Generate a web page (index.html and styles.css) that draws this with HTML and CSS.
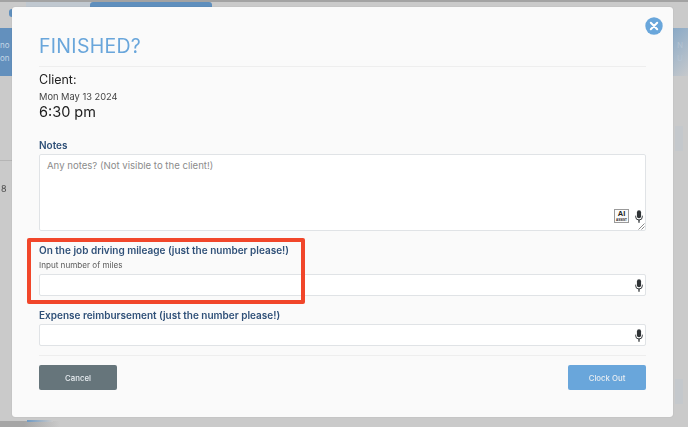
FILE: index.html
```html
<!DOCTYPE html>
<html lang="en">
<head>
<meta charset="utf-8">
<title>Finished?</title>
<link rel="stylesheet" href="styles.css">
</head>
<body>
<div class="backdrop">
  <div class="top-strip"></div>
  <div class="tabs"><span class="tab-pale"></span><span class="tab-blue"></span></div>
  <span class="dot"></span>
  <div class="band band-left"><span>no</span><span>on</span></div>
  <div class="band band-right"><span>N</span><span>U</span></div>
  <div class="rule-left"></div>
  <span class="eight">8</span>
  <span class="side-chip chip-top"></span>
  <span class="side-chip chip-bottom"></span>
  <span class="bottom-shade"></span>
  <span class="bottom-tab"></span>
</div>

<main class="modal">
  <button class="close" aria-label="Close">
    <svg viewBox="0 0 18 18" width="18" height="18"><circle cx="9" cy="9" r="8.7" fill="#69a6db"/><path d="M5.8 5.8l6.4 6.4M12.2 5.8l-6.4 6.4" stroke="#fff" stroke-width="2" stroke-linecap="round"/></svg>
  </button>
  <h1 class="title">FINISHED?</h1>
  <hr class="divider">
  <div class="client">Client:</div>
  <div class="date">Mon May 13 2024</div>
  <div class="time">6:30 pm</div>

  <label class="label notes-label">Notes</label>
  <div class="field textarea">
    <span class="placeholder">Any notes? (Not visible to the client!)</span>
    <div class="textarea-tools">
      <span class="ai"><b>AI</b><small>ASSIST</small></span>
      <svg class="mic" viewBox="0 0 10 16" width="8" height="13"><use href="#mic"/></svg>
    </div>
    <svg class="grip" viewBox="0 0 7 7" width="7" height="7"><path d="M6.5.5l-6 6M6.5 3.5l-3 3" stroke="#8a8a8a" stroke-width="1"/></svg>
  </div>

  <label class="label mileage-label">On the job driving mileage (just the number please!)</label>
  <div class="hint">Input number of miles</div>
  <div class="field input mileage-input">
    <svg class="mic" viewBox="0 0 10 16" width="8" height="13"><use href="#mic"/></svg>
  </div>

  <label class="label expense-label">Expense reimbursement (just the number please!)</label>
  <div class="field input">
    <svg class="mic" viewBox="0 0 10 16" width="8" height="13"><use href="#mic"/></svg>
  </div>

  <hr class="divider lower">
  <div class="actions">
    <button class="btn cancel">Cancel</button>
    <button class="btn clock">Clock Out</button>
  </div>
  <div class="highlight"></div>
</main>

<svg class="defs" width="0" height="0" aria-hidden="true">
  <symbol id="mic" viewBox="0 0 10 16">
    <rect x="2.4" y="0.3" width="5.2" height="10" rx="2.6" fill="#2f3336"/>
    <path d="M.8 7v1.2a4.2 4.2 0 0 0 8.4 0V7" fill="none" stroke="#2f3336" stroke-width="1.2"/>
    <path d="M5 12.2v3.5" stroke="#2f3336" stroke-width="1.6"/>
  </symbol>
</svg>
</body>
</html>
```
FILE: styles.css
```css
* { box-sizing: border-box; }
html, body { margin: 0; height: 100%; }
body {
  position: relative;
  width: 688px;
  height: 427px;
  overflow: hidden;
  background: #cacaca;
  font-family: Inter, "Open Sans", "Liberation Sans", sans-serif;
  filter: blur(.35px);
}
.backdrop { position: absolute; inset: 0; }
.top-strip { height: 2px; background: #a3a3a3; }
.tabs { position: absolute; top: 2px; left: 26px; display: flex; }
.tab-pale { width: 64px; height: 5px; background: #c0c8d0; }
.tab-blue { width: 122px; height: 5px; background: #5f8fbd; border-radius: 3px 3px 0 0; }
.dot { position: absolute; left: 9px; top: 9px; width: 6px; height: 8px; border-radius: 3px; background: #5f8fbd; }
.band {
  position: absolute;
  top: 28px;
  height: 48px;
  padding-top: 12px;
  display: flex;
  flex-direction: column;
  gap: 3px;
  font-size: 8px;
  line-height: 10px;
}
.band-left { left: 0; width: 12px; background: #6390bd; color: #c4d6e6; }
.band-right {
  right: 0;
  width: 15px;
  padding-left: 4px;
  background: linear-gradient(135deg, #8aa9c6, #c6c9cc);
  color: #b4c3d2;
}
.rule-left { position: absolute; left: 0; top: 160px; width: 12px; height: 1px; background: #b5b5b5; }
.eight { position: absolute; left: 1px; top: 183px; font-size: 9px; line-height: 11px; color: #4a4a4a; }
.side-chip { position: absolute; left: 675px; width: 8px; height: 25px; background: #c4c8cc; }
.chip-top { top: 126px; }
.chip-bottom { top: 379px; }
.bottom-shade {
  position: absolute;
  left: 0;
  top: 421px;
  width: 60px;
  height: 6px;
  background: linear-gradient(90deg, #a6a6a6 40%, #cacaca);
}
.bottom-tab {
  position: absolute;
  left: 27px;
  top: 420px;
  width: 26px;
  height: 2px;
  background: linear-gradient(90deg, #6f9ac4, #cacaca);
}

.modal {
  position: absolute;
  left: 12px;
  top: 7px;
  width: 661px;
  height: 410px;
  padding: 0 27px;
  background: #fafafa;
  border-radius: 3px;
  box-shadow: 0 0 1px rgba(0,0,0,.25);
}
.close {
  position: absolute;
  top: 10px;
  right: 10px;
  width: 18px;
  height: 18px;
  padding: 0;
  border: 0;
  background: none;
  display: block;
}
.close svg { display: block; }
.title {
  margin: 0;
  padding-top: 27px;
  font-size: 19.5px;
  line-height: 24px;
  font-weight: 400;
  letter-spacing: .3px;
  color: #69a6db;
}
.divider { margin: 8px 0 0; border: 0; border-top: 1px solid #eeeeee; }
.client { margin-top: 5px; font-size: 12.5px; line-height: 15px; color: #222; }
.date { margin-top: 4px; font-size: 9.3px; line-height: 12px; color: #444; }
.time { font-size: 14.5px; line-height: 18px; color: #1c1c1c; }
.label {
  display: block;
  font-size: 10px;
  line-height: 13px;
  font-weight: 600;
  color: #2f5078;
}
.notes-label { margin-top: 18px; }
.field {
  position: relative;
  background: #fff;
  border: 1px solid #e0e3e6;
  border-radius: 2px;
  margin-top: 2px;
}
.textarea { height: 77px; padding: 4px 7px; }
.placeholder { display: block; font-size: 9.6px; line-height: 13px; color: #8c8c8c; }
.textarea-tools {
  position: absolute;
  right: 2px;
  bottom: 7px;
  display: flex;
  align-items: flex-end;
  gap: 6px;
}
.ai {
  width: 15px;
  height: 14px;
  border: 1px solid #9a9a9a;
  background: #fafafa;
  display: flex;
  flex-direction: column;
  align-items: center;
  color: #222;
  line-height: 1;
}
.ai b { font-size: 7.5px; line-height: 8px; font-family: "Liberation Sans", sans-serif; }
.ai small { font-size: 3px; line-height: 4px; font-weight: 700; font-family: "Liberation Sans", sans-serif; }
.mileage-label { margin-top: 13px; }
.hint { margin-top: 3px; font-size: 8.1px; line-height: 10px; color: #5a5a5a; }
.input { height: 22px; display: flex; justify-content: flex-end; align-items: center; padding-right: 2px; }
.mileage-input { margin-top: 4px; }
.expense-label { margin-top: 13px; }
.mic { display: block; }
.grip { position: absolute; right: 0; bottom: 0; }
.divider.lower { margin-top: 9px; }
.actions { margin-top: 9px; display: flex; justify-content: space-between; }
.btn {
  width: 78px;
  height: 25px;
  border: 0;
  border-radius: 2px;
  color: #e9eef2;
  font: 500 7.8px Inter, "Open Sans", sans-serif;
}
.cancel { background: #66757b; }
.clock { background: #69a6db; }
.highlight {
  position: absolute;
  left: 15px;
  top: 231px;
  width: 278px;
  height: 66px;
  border: 4px solid #f1462a;
  border-radius: 2px;
  pointer-events: none;
}
.defs { position: absolute; }
```
